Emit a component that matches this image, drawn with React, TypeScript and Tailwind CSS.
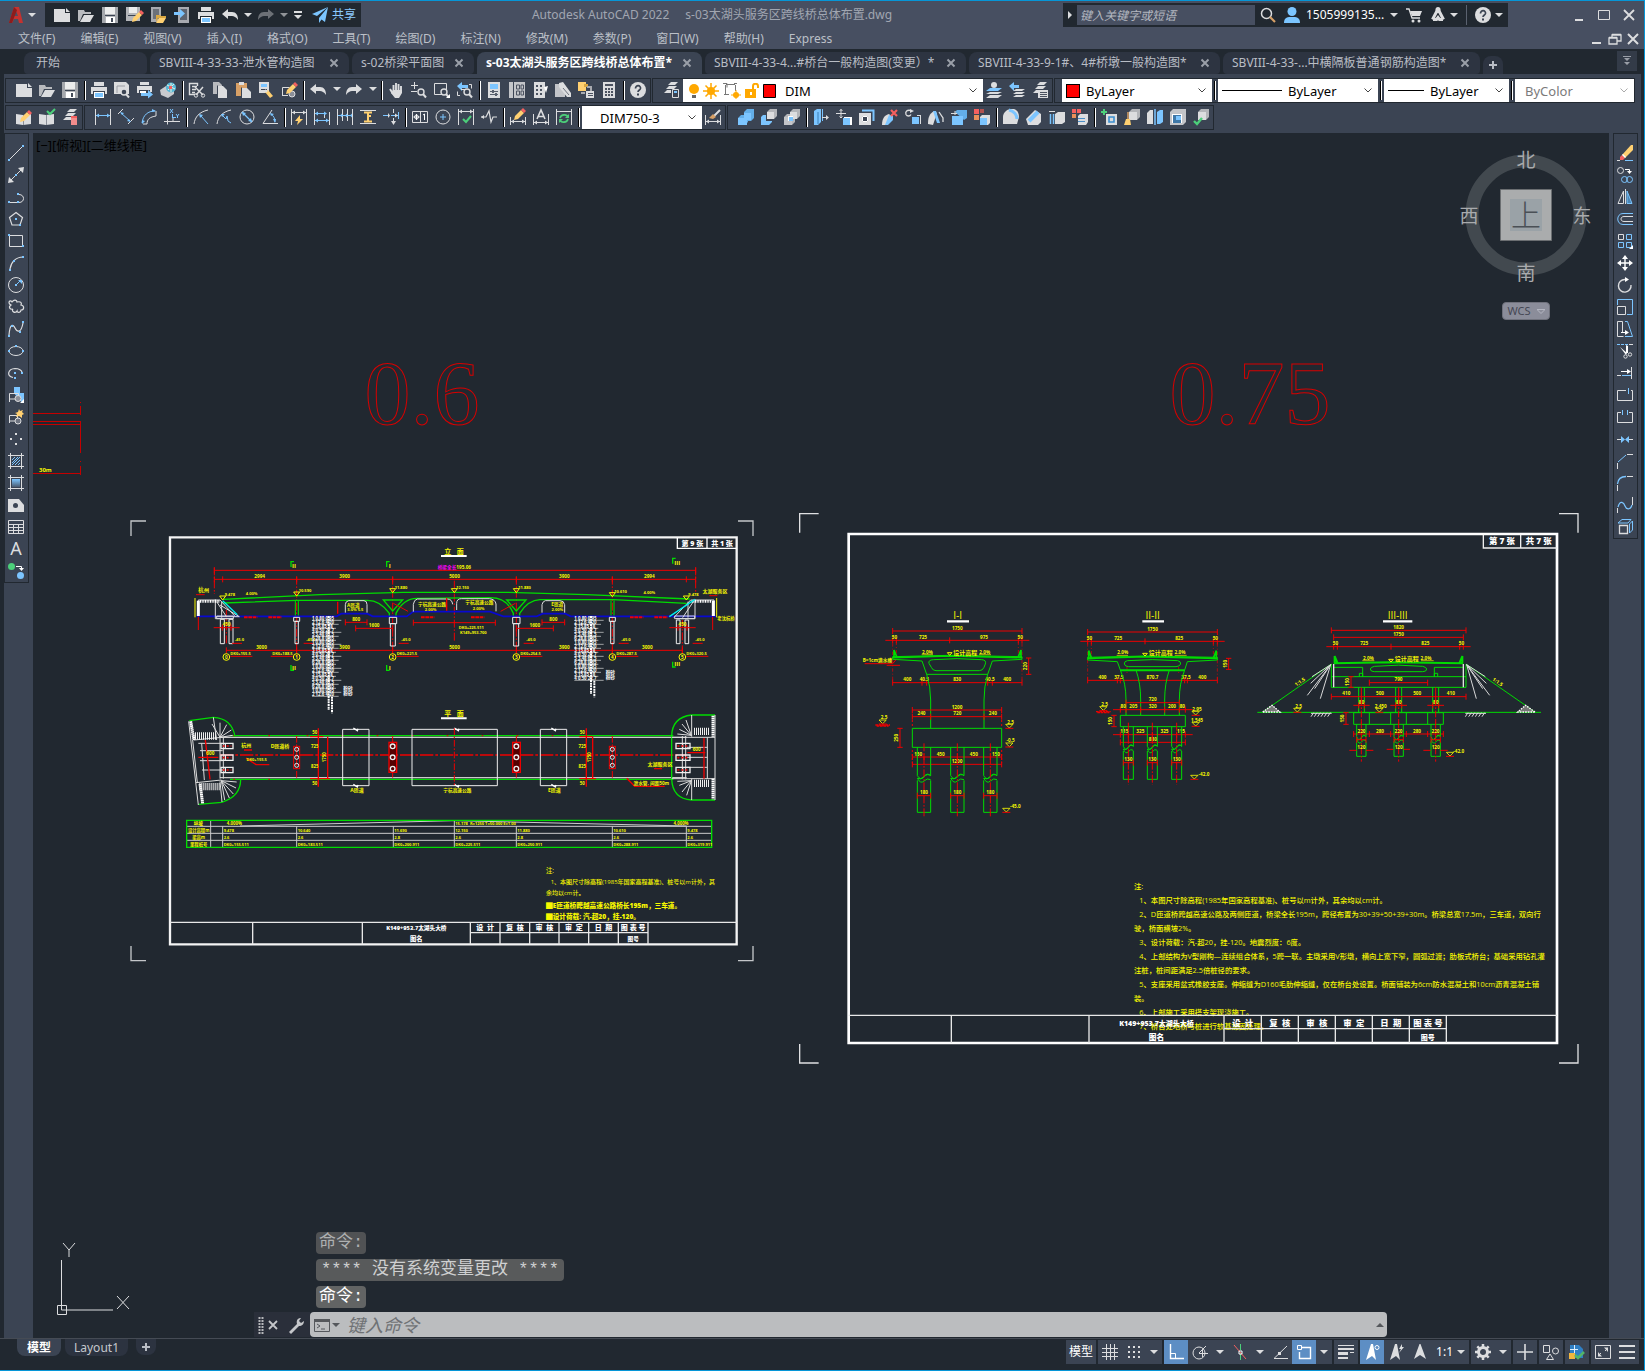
import { useState, type ReactNode } from "react";

const W = "#dcdddf";
const B = "#7cc5ff";
const Y = "#ffd071";
const R = "#f4605f";
const G = "#4ccf7a";
const D = "#3b4453";

const s = (d: string, c = W, w = 1) => (
  <path d={d} stroke={c} strokeWidth={w} fill="none" />
);
const f = (d: string, c = W) => <path d={d} fill={c} />;

const pencil = (
  <>
    {f("M5 9l6-6 3 3-6 6-4 1z", Y)}
    {f("M11 3l2-2 3 3-2 2z", R)}
  </>
);
const magnifier = (
  <>
    <circle cx="10" cy="10" r="3" stroke={W} strokeWidth="1.4" fill={D} />
    {s("M12 12l3 3.500", W, 2)}
  </>
);
const dots = (pts: number[][], c = B) =>
  pts.map(([x, y]) => <rect key={`${x}-${y}`} x={x} y={y} width="2" height="2" fill={c} />);
const layers = (
  <>
    {f("M5 3l3-3h7l-3 3z")}
    {f("M3 7l3-3h8l-3 3z")}
    {f("M1 11l3-3h8l-3 3z")}
  </>
);
const cube = (x: number, y: number, n: number, front = W, side = "#b4b6ba") => (
  <>
    <path d={`M${x} ${y + 3}l3-3h${n}v${n}l-3 3H${x}z`} fill={side} />
    <rect x={x} y={y + 3} width={n} height={n} fill={front} />
  </>
);

const ICONS: Record<string, ReactNode> = {
  new: <>{f("M0 2h11v4h5v9H0z")}{f("M12 1l4 4h-4z")}</>,
  open: <>{f("M0 3h6l1 2h6v2H5l-3 7H0z", "#b9bbbf")}{f("M6 8h10l-4 7H2z")}</>,
  save: <>{f("M0 0h16v16H0z", "#b4b6ba")}{f("M3 0h10v7H3z", "#eceded")}{f("M4 10h9v6H4z", "#fff")}{f("M0 0h3v16H0zM13 0h3v16h-3z", "#a5a8ad")}{f("M9 11h2v4H9z", "#444c5a")}{s("M3 8.500h10", D)}</>,
  saveas: <>{f("M0 0h14v14H0z", "#b4b6ba")}{f("M3 0h8v6H3z", "#eceded")}{s("M2 8.500h10", D)}<g transform="translate(2 2)">{pencil}</g></>,
  openweb: <>{f("M1 0h10v15H1z", "#a8aab0")}{f("M3 2h6v10H3z", "#6b7079")}{f("M6 8h4l1 1h5v2H8l-2 4z", "#d9a741")}{f("M9 11h7l-3 5H6z", Y)}</>,
  saveweb: <>{f("M4 0h11v16H4z", "#a8aab0")}{f("M6 2h7v11H6z", "#5e6470")}{f("M0 5h6V2l5 4.500-5 4.500V8H0z", B)}</>,
  print: <>{f("M3 0h10v4H3z")}{f("M0 5h16v7h-2V9H2v3H0z")}{f("M3 10h10v6H3z", "#fff")}{f("M4 11h8v4H4z", B)}</>,
  undo: f("M0 7l6-5v3h4c4 0 6 3 6 8-2-3-4-4-6-4H6v3z"),
  redo: f("M16 7l-6-5v3H6c-4 0-6 3-6 8 2-3 4-4 6-4h4v3z"),
  preview: <>{f("M0 0h12l3 3v9H0z")}{s("M3 11V4h8", "#9b9ea5")}{magnifier}</>,
  publish: <>{f("M3 0h9v3H3zM0 4h15v6h-2V8H2v3H0z")}{f("M3 9h6v2H3z", "#fff")}{f("M4 11h7V8l5 4.500-5 4V14H4z", B)}</>,
  dwf: <><path d="M0 8l6-4 8 2v6l-6 4-7-3z" fill="#c9cbcf" /><circle cx="11" cy="5.500" r="5" fill="#58b8d8" />{s("M7 3l8 4M8 8l6-6M11 1v9", "#e8f4e0")}{f("M9 4h3v3H9z", R)}</>,
  cut: <>{s("M8.500 4V1.500h-8v11H6M3 4.500h5M3 7.500h4M3 10.500h3", W, 1.4)}{s("M6 5l8 8M14 5l-7 8", W, 1.5)}<circle cx="7" cy="13.500" r="1.700" stroke={W} fill="none" /><circle cx="14" cy="13.500" r="1.700" stroke={W} fill="none" /></>,
  copy: <>{f("M1 0h6l3 3v9H1z", "#b9bbbf")}{f("M6 4h5l4 4v8H6z")}{s("M5.500 3.500v9", D)}</>,
  paste: <>{f("M1 1h11v13H1z", "#d8a066")}{f("M4 0h5v3H4z")}{f("M7 6h5l4 4v6H7z")}{s("M6.500 5.500v10", D)}</>,
  match: <>{f("M1 0h10v11H1z")}{f("M3 2h6v3H3z", B)}{s("M3 7.500h6", D)}{f("M7 10l3-2 5 6-3 2z", Y)}{s("M9 10l-2-2", W, 2)}</>,
  blockedit: <>{s("M1 13.500h6M1.500 13V5.500h7")}<circle cx="11" cy="12" r="3" stroke={W} fill="#8b8f98" /><g transform="translate(1 -1)">{pencil}</g></>,
  pan: <>{s("M5.500 9V3M8 8V1M10.500 8V2M13 10V4M2 7l3 5", W, 1.9)}{f("M5 8h9v3l-3 5H7l-4-5z")}</>,
  zoomrt: <>{s("M3.500 0v7M0 3.500h7M0 9.500h6")}{magnifier}</>,
  zoomwin: <>{s("M12.500 8V1.500h-12v11H8")}{magnifier}{f("M16 12v4h-4z", "#fff")}</>,
  zoomprev: <>{f("M0 4l5-4v3h6v3H5v3z", B)}{s("M3 13.500h-2.500v-4M12 2.500h2.500v4", W)}{s("M4 7.500h5", W)}{magnifier}</>,
  props: <>{f("M2 0h12v16H2z")}{f("M4 2h8v5H4z", B)}{s("M4 9.500h8M4 12.500h8", "#5a616e")}{f("M6 8h2v3H6zM9 11h2v3H9z", "#5a616e")}</>,
  dcenter: <>{f("M0 0h4v16H0zM5 0h11v16H5z", "#c3c5c9")}{s("M7.500 3h3v4h-3zM12 3h2.500v4H12zM7.500 9h3v4h-3zM12 9h2.500v4H12z", "#4b5260")}</>,
  palettes: <>{f("M2 0h11v16H2z")}{f("M4 3h2v2H4zM8 3h2v2H8zM4 7h2v2H4zM8 7h2v2H8zM4 11h2v2H4zM8 11h2v2H8z", "#4b5260")}{f("M12 5l4-1-2 7z", "#fff")}</>,
  sheetset: <>{f("M0 2h7l3 3v10H0z", "#c3c5c9")}{f("M4 1l4-1 8 11v4h-4L4 5z")}{s("M8 6l6 7", "#6e737d")}</>,
  markup: <>{f("M0 0h8v9H0z", Y)}{f("M6 2h4v3H6z", "#d9a741")}{s("M9 5h4v4M3 11h4", "#a8aab0", 2)}{f("M8 9h8v7H8z")}{s("M10 11.500h5M10 13.500h5", "#4b5260")}</>,
  calc: <>{f("M2 0h12v16H2z")}{f("M4 2h8v2H4z", "#4b5260")}{f("M4 6h2v2H4zM7 6h2v2H7zM10 6h2v2h-2zM4 9h2v2H4zM7 9h2v2H7zM10 9h2v2h-2zM4 12h2v2H4zM7 12h2v2H7zM10 12h2v2h-2z", "#4b5260")}</>,
  help: <><circle cx="8" cy="8" r="8" fill={W} />{s("M5.500 6.500C5.500 2.500 11 3 10.500 6.500 10.300 8 8 8 8 10", "#3b4453", 1.7)}{f("M7 11.500h2v2H7z", "#3b4453")}</>,
  layerprops: <>{layers}{f("M8 7h8v9H8z", D)}{s("M9.500 7.500h6v8h-6z")}{f("M11 9h3v2h-3z", B)}</>,
  laycur: <>{f("M4 6h12l-4 3H0z", B)}{f("M4 10h12l-4 2H0zM4 13h12l-4 3H0z")}<circle cx="8" cy="3" r="3" fill={W} /></>,
  layprev: <>{f("M0 4l5-4v3h5v3H5v3z", B)}{f("M7 7h9l-3 2H4zM7 10h9l-3 2H4zM7 13h9l-3 2H4z")}</>,
  laystate: <>{layers}{f("M6 8h10v8H6z")}{s("M8 10.500h7M8 12.500h7M8 14.500h7", "#4b5260")}</>,
  refedit: <>{f("M0 5l7 1 8-1v10l-8 1-7-1z")}{s("M7.500 6v10", "#8b8f98")}{pencil}</>,
  refok: <>{f("M0 5l7 1 8-1v10l-8 1-7-1z")}{s("M7.500 6v10", "#8b8f98")}{s("M8 2l3 3 5-5", G, 2)}</>,
  laydel: <>{layers}{f("M9 7h6v9H9z", "#f28c8c")}{f("M9 7h6v2H9z", R)}</>,
  dimlin: <>{s("M.500 0v16M15.500 0v16")}{s("M1 6.500h14", B)}{f("M1 6.500l3-2v4zM15 6.500l-3-2v4z", B)}</>,
  dimali: <>{s("M0 5l5-5M10 15l6-6")}{s("M3 4l9 8", B)}{f("M2 3l4 1-2 2zM13 13l-4-1 2-2z", B)}</>,
  dimarc: <>{s("M6 15C6 10 9 8 15 7M2 15h4M15 7V2")}{s("M1 14C2 6 7 2 14 2", B)}{f("M1 15l0-4 3 1zM15 2l-4-2v3z", B)}</>,
  dimord: <>{s("M3.500 0v15.500M0 12.500h16M9 9v4")}{s("M8 8.500h4M8.500 5v4M6 0l3 4M9 0L6 4M12 5l1.500 2L15 5M13.500 7v2", B)}</>,
  dimrad: <>{s("M1 15C2 8 6 3 15 1")}{s("M8 7l7 8", B)}{f("M6 5l4 1-3 3z", B)}</>,
  dimjog: <>{s("M1 15C2 8 6 3 15 1")}{s("M7 7l3 3 1-3 1 5 3 2", B)}{f("M5 5l4 0-3 3z", B)}</>,
  dimdia: <><circle cx="8" cy="8" r="7" stroke={W} fill="none" />{s("M3 3l10 10", B, 1.2)}{f("M3 3l4 1-3 3zM13 13l-4-1 3-3z", B)}</>,
  dimang: <>{s("M10 1L1 14.500h15")}{s("M9 5c3 2 4 5 4 8", B)}{f("M8 4l4 1-3 2zM13 14l-2-4h3z", B)}</>,
  dimquick: <>{s("M.500 0v16M15.500 0v16M1 3.500h14")}{f("M1 3.500l3-2v4zM15 3.500l-3-2v4z")}{f("M9 6l-5 6h3l-1 4 6-6H9z", Y)}</>,
  dimbase: <>{s("M.500 0v16M10.500 5v4M15.500 3v13")}{s("M1 4.500h11M1 11.500h14", B)}{f("M1 4.500l3-2v4zM13 4.500l-3-2v4zM1 11.500l3-2v4zM15 11.500l-3-2v4z", B)}</>,
  dimcont: <>{s("M.500 0v16M5.500 0v12M10.500 0v12M15.500 0v16")}{s("M1 6.500h14", B)}{f("M3 6.500l2-2v4zM8 6.500l2-2v4zM13 6.500l2-2v4z", B)}</>,
  dimspace: <>{s("M0 1.500h16M0 14.500h16")}{s("M4 3.500h8M8 3v10M4 12.500h8M8 7h3", Y, 2)}</>,
  dimbreak: <>{s("M10.500 0v4M10.500 9v6")}{s("M0 6.500h6M8 6.500h8M15.500 3v7", B)}{f("M8 12l2.500 4 2.500-4zM15 6.500l-3-2v4zM5 4v5l2-2.500z")}</>,
  tolerance: <>{s("M.500 2.500h15v11H.500zM8.500 3v10")}<circle cx="4.500" cy="8" r="2" stroke={W} fill="none" />{s("M1.500 8h6M4.500 5v6M11 6l1.500-1v6", "#fff")}</>,
  center: <><circle cx="8" cy="8" r="7" stroke={W} fill="none" />{s("M5 8h6M8 5v6", B)}</>,
  inspect: <>{s("M.500 0v16M15.500 0v16M1 2.500h14")}{f("M1 2.500l3-2v4zM15 2.500l-3-2v4z")}{s("M5 10l3 3 5-6", G, 2)}</>,
  jogline: <>{s("M0 8h5l3-6 2 11 2-5h4", W, 1.2)}{f("M0 8l3-2v4z")}</>,
  dimedit: <>{s("M.500 8v8M15.500 8v8M1 12.500h14")}{f("M1 12.500l3-2v4zM15 12.500l-3-2v4z")}<g transform="translate(0 -2)">{pencil}</g></>,
  dimtedit: <>{s("M.500 5v11M15.500 5v11M1 13.500h14")}{f("M1 13.500l3-2v4zM15 13.500l-3-2v4z")}{s("M4 10l4-9 4 9M5.500 7.500h5", W, 1.6)}</>,
  dimupdate: <>{s("M.500 0v16M15.500 0v16M1 2.500h14")}{s("M4 9c1-4 7-4 8-1M12 10c-1 4-7 4-8 1", G, 1.6)}{f("M13 5v4H9zM3 14v-4h4z", G)}</>,
  dimstyle: <>{s("M.500 6v10M15.500 6v10M1 12.500h14")}{f("M1 12.500l3-2v4zM15 12.500l-3-2v4z")}{s("M9 7l6-6", W, 2)}{f("M4 9l4-4 3 3-3 2z", "#d8a066")}</>,
  union: <>{f("M0 9l3-3h3V3l3-3h7v9l-3 3h-3v1l-3 3H0z", "#63aee8")}{f("M0 9h6V4h7v7H9v5H0z", B)}</>,
  subtract: <>{f("M0 8l2-2h3v6h6v1l-3 3H0z", B)}{cube(6, 0, 7)}</>,
  intersect: <>{cube(0, 5, 8, "#c3c5c9")}{cube(6, 0, 7)}{f("M4 7h5v5H4z", "#fff")}{f("M5 8h4v4H5z", B)}</>,
  extrudeface: <>{f("M1 2l3-2h4v13l-3 3H1z", B)}{s("M5 3v12", "#3b7fb5")}{s("M9.500 0v12", B)}{s("M9 8.500h6", W)}{f("M16 8.500l-3-2.500v5z")}</>,
  moveface: <>{s("M5 0v9M0 4.500h10M3.500 2L5 .500 6.500 2M3.500 7.500L5 9l1.500-1.500", W)}{f("M8 8h8v8H8z", "#fff")}{f("M7 9h7v7H7z", B)}</>,
  offsetface: <>{f("M0 4h12v12H0z")}{f("M3 7h6v6H3z", D)}{s("M3.500 7.500h5v5h-5z", "#fff")}{s("M3 1.500h11.500V12", B, 2)}</>,
  delface: <>{f("M0 16c0-7 3-10 7-11l2 2-4 9z")}{f("M7 6l4 1v4l-5 5H3z", B)}{s("M9 1l6 6M15 1L9 7", R, 2.2)}</>,
  rotface: <>{s("M6 1.500c-4-1-6 1-5 4 1 2 4 2 5 0", W, 1.3)}{f("M5 0l4 2-4 2z")}{s("M12 6.500h4M15.500 6v9", W)}{f("M7 8h7v7H7z", B)}</>,
  taperface: <>{f("M0 15c0-6 1-10 6-13l3 2-4 12z")}{f("M5 2h3l4 12H9z", B)}{s("M11 3l4 6v4", W, 1.3)}</>,
  copyface: <>{f("M4 3l2-2h10v8l-3 2z", "#63aee8")}{f("M1 7h11v9H1z", B)}{s("M0 4.500h6M4 2v4", W)}</>,
  colorface: <>{f("M0 0h5v5H0z", R)}{f("M6 0h4v4H6z", "#b0524f")}{f("M0 6h5v5H0z", "#e8905a")}{f("M6 8l2-2h8v8l-2 2H6z")}{f("M6 9h7v7H6z", B)}</>,
  copyedge: <>{f("M0 8c0-4 3-7 7-8h4c3 1 5 4 5 8l-2 7H0z")}{s("M6 1c5 1 8 5 8 9", B, 3)}</>,
  coloredge: <>{f("M0 10L9 1l6 4v8l-3 3H2z")}{s("M3 12L12 3", B, 4)}</>,
  imprint: <>{f("M6 5l3-2h7v10l-3 2H6z")}{s("M1.500 5v10M4.500 5v10", B, 1.5)}{s("M0 2.500h6", W)}</>,
  clean: <>{f("M0 0h4v4H0zM5 0h4v4H5z", R)}{f("M0 5h4v4H0z", "#e8905a")}{f("M6 7l2-2h8v8l-2 3H6z")}{s("M6 9.500h7M6 12.500h7", "#4b8fc8")}</>,
  separate: <>{s("M3 0v6M0 3h6", G, 2)}{f("M5 5h11v11H5z")}{s("M8 8h5v5H8z", "#3b8fd0", 1.6)}</>,
  shell: <>{cube(5, 0, 8)}{s("M4 3v7", "#d8a066", 1.5)}{f("M2 10h4l1 6H0z", Y)}</>,
  slice: <>{f("M0 4l3-3h3v14H0z")}{f("M10 3l3-2h3v12l-3 2h-3z", B)}{s("M8 0v16", B, 1.5)}</>,
  thicken: <>{f("M0 3l3-3h13v13l-3 3H0z", "#c3c5c9")}{f("M2 5h10v9H2z", "#fff")}{f("M3 6h8v8H3z", "#3f78a8")}{f("M6 7h5v4H6z", B)}</>,
  check: <>{cube(5, 0, 8)}{s("M1 12l3 3 5-6", G, 2.4)}</>,
  line: <>{s("M2 14L14 2")}{dots([[0, 14], [14, 0]])}</>,
  xline: <>{s("M3 13L13 3")}{f("M0 16l1-6 5 5zM16 0l-6 1 5 5z")}{dots([[7, 7]])}</>,
  pline: <>{s("M2 13.500h7M11 5.500c6 0 6 8 0 8")}{dots([[0, 12], [9, 4], [9, 12]])}</>,
  polygon: <>{s("M8 1.500L14.500 6.500 12 14H4L1.500 6.500z", W, 1.2)}{dots([[7, 7], [11, 13]])}</>,
  rect: <>{s("M1.500 2.500h13v11h-13z")}{dots([[0, 1], [14, 12]])}</>,
  arc: <>{s("M2 14C3 7 8 2 15 2", W, 1.2)}{dots([[1, 14], [5, 5], [14, 1]])}</>,
  circle: <><circle cx="8" cy="8" r="7.500" stroke={W} fill="none" />{s("M8 8l4-4", B)}{f("M10 3h4v4z", B)}{dots([[7, 7]])}</>,
  cloud: s("M3 6C-1 4 2 0 4 3 6 0 9 1 9 3c4-1 5 1 4 3 4 1 3 5 0 5 0 3-4 3-4 1-2 3-6 0-4-2C2 11 0 8 3 6z", W, 1.2),
  spline: <>{s("M1 14C2 2 5 3 7 7s6 6 8-5", W, 1.2)}{dots([[0, 14], [3, 4], [11, 10], [14, 0]])}</>,
  ellipse: <><ellipse cx="8" cy="8" rx="7" ry="4.500" stroke={W} fill="none" />{dots([[0, 7], [7, 2], [14, 7]])}</>,
  ellarc: <>{s("M5 12.500C-2 11 0 4 7 3.500c4 0 7 2 7 4", W, 1.2)}{dots([[6, 7], [13, 7], [6, 12]])}</>,
  insert: <>{f("M6 0h6v6h4v10l-4-2-6-8z", B)}{s("M1.500 12V6.500h9V12H1.500v3")}<circle cx="10" cy="11.500" r="3" stroke={W} fill="#8b8f98" />{f("M16 12v4h-4z", "#fff")}</>,
  block: <>{s("M1.500 14V6.500h8V12H2")}<circle cx="10" cy="12" r="3" stroke={W} fill="#6e7480" />{f("M11 0l1 2 3-1-1 2 2 2-2 1 0 3-3-2-3 1 1-3-2-1 3-1z", Y)}</>,
  point: dots([[7, 2], [2, 7], [12, 7], [7, 12]], W),
  hatch: <>{s("M0 2.500h16M0 13.500h16M2.500 0v16M13.500 0v16")}{s("M4 7l3-3M4 10l6-6M4 12l8-8M7 12l5-5M10 12l2-2", B)}</>,
  gradient: <><defs><linearGradient id="grad" x1="0" y1="0" x2="0" y2="1"><stop offset="0" stopColor={B} /><stop offset="1" stopColor="#4a5a6e" /></linearGradient></defs>{s("M0 2.500h16M0 13.500h16M2.500 0v16M13.500 0v16")}<rect x="4" y="4" width="8" height="8" fill="url(#grad)" /></>,
  region: <>{f("M0 2h11l5 6v7H0z")}<circle cx="7.500" cy="8.500" r="2.500" fill={D} /></>,
  table: <>{s("M.500 1.500h15v13H.500zM0 5.500h16M0 8.500h16M0 11.500h16M5.500 5v10M10.500 5v10")}</>,
  mtext: <text x="8" y="14" fontSize="18" textAnchor="middle" fill={W}>A</text>,
  addsel: <><circle cx="3.500" cy="3.500" r="3.500" fill={G} /><circle cx="12.500" cy="12.500" r="3.500" fill={B} />{s("M8 3.500h5.500V6", "#fff")}{f("M11 5h5l-2.500 3z", "#fff")}</>,
  erase: <>{s("M0 15.500h3", W)}{s("M8 15.500h8", B)}{f("M5 10L14 0h2v5L8 13z", Y)}{f("M3 12l2-2 3 3-2 2H3z", R)}{f("M5 10l1-1 3 3-1 1z", "#fff")}</>,
  copyobj: <><circle cx="3.500" cy="3.500" r="3" stroke={W} fill="none" /><circle cx="7.500" cy="12.500" r="3" stroke={B} fill="none" /><circle cx="12.500" cy="12.500" r="3" stroke={B} fill="none" />{s("M8 2.500h4.500V5", "#fff")}{f("M10 4h5l-2.500 3z", "#fff")}</>,
  mirror: <>{s("M6.500 2v12.500H1z")}{s("M8.500 0v15", W)}{f("M10 2v13h5z", "#4b86b5")}{s("M10 2v12.500h5z", B)}</>,
  offset: <>{s("M16 2.500H6C-1 2.500-1 13.500 6 13.500h10", B)}{s("M16 5.500H7c-4 0-4 5 0 5h9")}</>,
  array: <>{s("M1.500 1.500h5v5h-5z")}{s("M9.500 1.500h5v5h-5zM1.500 9.500h5v5h-5zM9.500 9.500h5v5h-5z", B)}{f("M16 12v4h-4z", "#fff")}</>,
  move: <>{s("M8 2v12M2 8h12", "#fff", 1.4)}{f("M8 0l3 4H5zM8 16l3-4H5zM0 8l4-3v6zM16 8l-4-3v6z", "#fff")}</>,
  rotate: <>{s("M8 2.500A6.300 6.300 0 1 0 14 8", W, 1.4)}{f("M8 0l4 2.500L8 5z", "#fff")}</>,
  scale: <>{s("M.500 6V.500h15v15H10", B)}{s("M.500 7.500h8v8h-8z")}</>,
  stretch: <>{s("M5.500 12V.500h-5v15h6")}{s("M8 .500h2.500l5 15H8", B)}{s("M4 11.500h5", "#fff")}{f("M8 9l4 2.500L8 14z", "#fff")}</>,
  trim: <>{s("M0 1.500h3M4 1.500h3M8 1.500h3", B)}{s("M12 1.500h4")}{f("M9 2l2 1v7H9zM3 4l7 6-1 2z", "#fff")}<circle cx="8.500" cy="13.500" r="1.700" stroke={W} fill="none" /><circle cx="13" cy="11.500" r="1.700" stroke={W} fill="none" /></>,
  extend: <>{s("M14.500 2v12M0 10.500h4")}{s("M5 10.500h9", B)}{s("M4 6.500h7", "#fff")}{f("M10 4l4 2.500L10 9z", "#fff")}</>,
  breakpt: <>{s("M9 3.500H.500v10h15v-10H14")}{s("M11.500 1v6", B)}</>,
  breakobj: <>{s("M4 3.500H.500v10h15v-10H12")}{s("M5.500 1v5M10.500 1v5", B)}</>,
  join: <>{s("M0 8.500h4M12 8.500h4")}{f("M4 5l4 3.500L4 12zM12 5L8 8.500l4 3.500z", B)}</>,
  chamfer: <>{s("M.500 16v-6M10 1.500h6")}{s("M1 9l8-7", B)}</>,
  fillet: <>{s("M.500 16v-6M10 1.500h6")}{s("M.500 9C1 4 4 1.500 9 1.500", B, 1.3)}</>,
  blend: <>{s("M.500 16v-5M15.500 0v8")}{s("M1 10c2-8 6-4 7-1s5 5 7-1", B, 1.2)}</>,
  explode: <>{s("M2.500 6.500h8v8h-8z", W, 1.3)}{s("M1 4l4-3.500h9L11 4zM12.500 5l3-3v9l-3 3z", B)}</>,
  grid: s("M4.500 0v16M8.500 0v16M12.500 0v16M0 4.500h16M0 8.500h16M0 12.500h16"),
  snap: dots([[2, 2], [7, 2], [12, 2], [2, 7], [7, 7], [12, 7], [2, 12], [7, 12], [12, 12]], W),
  ortho: <>{s("M2.500 0v14.500H16", "#fff", 1.4)}{s("M3 9.500h4.500V14", "#fff")}</>,
  polar: <><circle cx="7" cy="9" r="6" stroke={W} fill="none" />{s("M7 9L14 2M7 9.500h9M10.500 6v7", W)}</>,
  iso: <>{s("M2 1l12 14", R)}{s("M8.500 0v6M8.500 10v6", G)}{s("M7 7h3v3H7z", "#fff")}</>,
  otrack: <>{s("M15 2L2 14.500h14")}{f("M6 8h3v3H6z")}</>,
  osnap: <>{s("M6 3.500h8.500v11h-11V8", "#fff", 1.4)}{s("M1.500 1.500h4v4h-4z", "#fff")}</>,
  lwt: <>{f("M0 1h16v1H0zM0 4h16v2H0zM0 8h10v3H0zM0 13h10v2H0zM12 8h4v1h-4z")}</>,
  anno1: <>{f("M7 0l2 0 3 16-4-4-6 4z", "#fff")}<circle cx="13" cy="3.500" r="2" stroke="#fff" fill="none" /></>,
  anno2: <>{f("M7 0l2 0 3 16-4-4-6 4z")}{f("M14 0l-3 5h2l-2 4 5-6h-2z")}</>,
  anno3: f("M7.500 0h1L14 15l-6-4-6 4z"),
  gear: <><circle cx="8" cy="8" r="4.500" stroke={W} strokeWidth="3" fill="none" />{s("M8 0v3M8 13v3M0 8h3M13 8h3M2.300 2.300l2 2M11.700 11.700l2 2M13.700 2.300l-2 2M4.300 11.700l-2 2", W, 2.5)}</>,
  plus: s("M8 0v16M0 8h16", W, 1.6),
  shapes: <>{s("M.500 1.500h6v7h-6z")}<circle cx="12.500" cy="7" r="3" stroke={W} fill="none" />{s("M7 10l3.500 5.500h-7z")}</>,
  hardware: <>{f("M1 1h9l4 4v9H1z", "#2f7fc4")}{s("M1 5.500h8M5.500 1v8", "#dcefff")}{f("M0 9h6v6H0z", "#f0b63f")}{s("M6 11l3 3 6-6", "#52b56a", 2.6)}</>,
  expand: <>{s("M.500 1.500h15v13H.500z")}{s("M3 12l3-3M10 7l3-3", W)}{f("M3 8v4.500h4zM13 3.500V8L9 3.500z")}</>,
  menu: s("M0 2h16M0 8h16M0 14h16", W, 2),
  search: <><circle cx="6.500" cy="6.500" r="5" stroke={W} strokeWidth="1.500" fill="none" />{s("M10 10l5 5", "#d8a066", 2.2)}</>,
  user: <><circle cx="8" cy="4.500" r="4.500" fill={B} />{f("M0 16c0-6 4-6 8-6s8 0 8 6z", B)}</>,
  cart: <>{s("M0 2h3l3 9h8", W, 1.3)}{f("M4 4h12l-2 5H6z")}<circle cx="7" cy="14" r="1.500" fill={W} /><circle cx="13" cy="14" r="1.500" fill={W} /></>,
  adsk: <>{s("M8 2L2.500 12.500M8 2l5.500 10.500M3 12.500h3.500l1.500-2 1.500 2H13", W, 3)}<circle cx="8" cy="2.500" r="2.500" fill={W} /></>,
  send: <>{f("M16 0L0 7l5 2z", B)}{f("M16 0L7 11v5l2.500-3.500L13 15z", B)}</>,
};

function Icon({ name }: { name: string }) {
  return (
    <svg viewBox="0 0 16 16" className="block h-4 w-4 shrink-0 overflow-visible" aria-hidden="true">
      {ICONS[name]}
    </svg>
  );
}

function Caret({ dim = false }: { dim?: boolean }) {
  return (
    <svg viewBox="0 0 8 4" className={dim ? "h-1 w-2 shrink-0 opacity-60" : "h-1 w-2 shrink-0"} aria-hidden="true">
      <path d="M0 0h8L4 4z" fill="#dcdddf" />
    </svg>
  );
}

function ToolStrip({ items }: { items: string[] }) {
  return (
    <>
      {items.map((name, i) => {
        if (name === "|") {
          return (
            <span key={i} className="flex w-1.5 shrink-0 justify-center py-0.5">
              <span className="w-0.5 border-l border-black bg-white" />
            </span>
          );
        }
        if (name === "v") {
          return (
            <button key={i} type="button" aria-label="展开" className="flex w-[13px] shrink-0 items-center justify-center pb-1">
              <Caret />
            </button>
          );
        }
        return (
          <button key={i} type="button" aria-label={name} className="w-[23px] shrink-0 pb-px pl-[3px] hover:bg-[#525c6e]">
            <Icon name={name} />
          </button>
        );
      })}
    </>
  );
}

function ToolBox({ children }: { children: ReactNode }) {
  return (
    <div className="flex h-[25px] border border-[#212830]">
      <span className="w-[7px] shrink-0 py-[3px] pl-0.5">
        <span className="block h-full w-1 bg-[radial-gradient(#dcdddf_25%,transparent_30%)] bg-[size:2px_2px]" />
      </span>
      {children}
    </div>
  );
}

interface ComboProps {
  label: string;
  value: string;
  className: string;
  muted?: boolean;
  children?: ReactNode;
}

function Combo({ label, value, className, muted, children }: ComboProps) {
  return (
    <label className={`flex items-center bg-white pr-1.5 pl-1 text-[13px] ${muted ? "text-[#7a7a7a]" : "text-black"} ${className}`}>
      {children}
      <select aria-label={label} disabled={muted} className="h-full min-w-0 flex-1 appearance-none bg-transparent pl-1.5 leading-4 outline-none disabled:opacity-100">
        <option>{value}</option>
      </select>
      <svg viewBox="0 0 8 5" className="h-[5px] w-2" aria-hidden="true">
        <path d="M.5.5L4 4 7.500.5" stroke={muted ? "#aaa" : "#444"} fill="none" />
      </svg>
    </label>
  );
}

const STANDARD_TOOLS = [
  "new", "open", "save", "|", "print", "preview", "publish", "dwf", "|", "cut", "copy", "paste", "match", "blockedit", "|",
  "undo", "v", "redo", "v", "|", "pan", "zoomrt", "zoomwin", "zoomprev", "|", "props", "dcenter", "palettes", "sheetset", "markup", "calc", "|", "help",
];
const DIM_TOOLS = [
  "dimlin", "dimali", "dimarc", "dimord", "|", "dimrad", "dimjog", "dimdia", "dimang", "|", "dimquick", "dimbase", "dimcont", "dimspace", "dimbreak", "|",
  "tolerance", "center", "inspect", "jogline", "|", "dimedit", "dimtedit", "dimupdate", "|",
];
const SOLID_TOOLS = [
  "union", "subtract", "intersect", "|", "extrudeface", "moveface", "offsetface", "delface", "rotface", "taperface", "copyface", "colorface", "|",
  "copyedge", "coloredge", "imprint", "clean", "|", "separate", "shell", "slice", "thicken", "check",
];
const DRAW_TOOLS = [
  "line", "xline", "pline", "polygon", "rect", "arc", "circle", "cloud", "spline", "ellipse", "ellarc", "insert", "block", "point",
  "hatch", "gradient", "region", "table", "mtext", "addsel",
];
const MODIFY_TOOLS = [
  "erase", "copyobj", "mirror", "offset", "array", "move", "rotate", "scale", "stretch", "trim", "extend", "breakpt", "breakobj",
  "join", "chamfer", "fillet", "blend", "explode",
];
const MENUS = [
  "文件(F)", "编辑(E)", "视图(V)", "插入(I)", "格式(O)", "工具(T)", "绘图(D)", "标注(N)", "修改(M)", "参数(P)", "窗口(W)", "帮助(H)", "Express",
];
const TABS = [
  { title: "SBVIII-4-33-33-泄水管构造图", width: "w-[199px]" },
  { title: "s-02桥梁平面图", width: "w-[122px]" },
  { title: "s-03太湖头服务区跨线桥总体布置*", width: "w-[225px]" },
  { title: "SBVIII-4-33-4...#桥台一般构造图(变更）*", width: "w-[261px]" },
  { title: "SBVIII-4-33-9-1#、4#桥墩一般构造图*", width: "w-[251px]" },
  { title: "SBVIII-4-33-...中横隔板普通钢筋构造图*", width: "w-[257px]" },
];

function TitleBar() {
  return (
    <div className="flex h-[27px] items-start pt-0.5">
      <button type="button" aria-label="应用程序菜单" className="flex h-6 w-[45px] items-center gap-[5px] pl-[9px]">
        <svg viewBox="0 0 14 16" className="h-4 w-3.5" aria-hidden="true">
          <path d="M5 0h5l4 16h-4l-1-4H5l-2 4H0z" fill="#c5322f" />
          <path d="M7 4l2 5H5z" fill="#474f61" />
          <path d="M5 0L0 16h3L8 3z" fill="#8e1c1c" />
        </svg>
        <Caret />
      </button>
      <div className="flex h-6 items-center bg-[#212830] pl-[5px]">
        {["new", "open", "save", "saveas", "openweb", "saveweb", "print", "undo"].map((n) => (
          <button key={n} type="button" aria-label={n} className="w-6 pl-1">
            <Icon name={n} />
          </button>
        ))}
        <button type="button" aria-label="放弃列表" className="flex w-3 justify-center"><Caret /></button>
        <button type="button" aria-label="重做" className="w-6 pl-1 opacity-40"><Icon name="redo" /></button>
        <button type="button" aria-label="重做列表" className="flex w-3 justify-center"><Caret dim /></button>
        <button type="button" aria-label="自定义" className="flex w-4 flex-col items-center gap-0.5">
          <span className="h-0.5 w-2 bg-[#dcdddf]" />
          <Caret />
        </button>
        <button type="button" className="flex items-center gap-1 pr-[5px] pl-1.5 text-[#8ccaff]">
          <Icon name="send" />
          共享
        </button>
      </div>
      <div className="flex h-6 flex-1 items-center justify-center gap-4 whitespace-nowrap text-[#a1a6b1]">
        <span>Autodesk AutoCAD 2022</span>
        <span>s-03太湖头服务区跨线桥总体布置.dwg</span>
      </div>
      <div className="flex h-6 w-[445px] items-center bg-[#212830] text-white">
        <svg viewBox="0 0 4 8" className="mx-1 h-2 w-1.5" aria-hidden="true"><path d="M0 0l4 4-4 4z" fill="#dcdddf" /></svg>
        <input aria-label="搜索" placeholder="键入关键字或短语" className="h-5 w-[178px] bg-[#474f61] px-[3px] italic outline-none placeholder:text-[#b4b8c0]" />
        <button type="button" aria-label="search" className="ml-[5px]"><Icon name="search" /></button>
        <button type="button" className="ml-2 flex items-center gap-1.5">
          <Icon name="user" />
          1505999135...
          <Caret />
        </button>
        <button type="button" aria-label="cart" className="ml-2"><Icon name="cart" /></button>
        <button type="button" aria-label="应用" className="ml-2 flex items-center gap-1"><Icon name="adsk" /><Caret /></button>
        <span className="mx-2 h-5 w-px bg-[#5b6270]" />
        <button type="button" aria-label="help" className="flex items-center gap-1"><Icon name="help" /><Caret /></button>
      </div>
      <div className="flex h-6 w-[136px] items-center justify-end gap-[11px] pr-2">
        <button type="button" aria-label="最小化"><svg viewBox="0 0 14 14" className="h-3.5 w-3.5"><path d="M3 12h8" stroke="#dcdddf" strokeWidth="2" /></svg></button>
        <button type="button" aria-label="最大化"><svg viewBox="0 0 14 14" className="h-3.5 w-3.5"><path d="M1.500 2.500h11v9h-11z" stroke="#dcdddf" fill="none" /></svg></button>
        <button type="button" aria-label="关闭"><svg viewBox="0 0 14 14" className="h-3.5 w-3.5"><path d="M2 2l10 10M12 2L2 12" stroke="#dcdddf" strokeWidth="1.800" /></svg></button>
      </div>
    </div>
  );
}

function FileTabs() {
  const [active, setActive] = useState(2);
  return (
    <div className="flex h-[25px] items-end gap-[3px] pr-[7px] pl-6 text-[#b9bdc5]">
      <button type="button" className="h-[22px] w-[123px] rounded-t-lg rounded-b bg-[#2d3441] pl-3 text-left">开始</button>
      {TABS.map((tab, i) => (
        <button
          key={tab.title}
          type="button"
          onClick={() => setActive(i)}
          className={`flex h-[22px] items-center justify-between rounded-t-lg pr-2.5 pl-[9px] whitespace-nowrap ${tab.width} ${
            i === active ? "bg-[#3b4453] font-bold text-white" : "rounded-b bg-[#2d3441]"
          }`}
        >
          {tab.title}
          <svg viewBox="0 0 10 10" className="h-2.5 w-2.5 shrink-0" aria-hidden="true">
            <path d="M1.500 1.500l7 7M8.500 1.500l-7 7" stroke="#9a9fa8" strokeWidth="2" />
          </svg>
        </button>
      ))}
      <button type="button" aria-label="新图形" className="flex h-[18px] w-5 items-center justify-center rounded-t-lg bg-[#2d3441]">
        <svg viewBox="0 0 8 8" className="h-2 w-2"><path d="M4 0v8M0 4h8" stroke="#b9bdc5" strokeWidth="2" /></svg>
      </button>
      <button type="button" aria-label="更多选项卡" className="mb-[3px] ml-auto flex h-5 w-5 items-center justify-center bg-[#333b48]">
        <svg viewBox="0 0 8 10" className="h-2.5 w-2"><path d="M0 0h8v1H0zM1 2h6L4 5zM1 6h6L4 9z" fill="#9a9fa8" /></svg>
      </button>
    </div>
  );
}

function Toolbars() {
  return (
    <div className="flex flex-col gap-0.5 bg-[#3b4453] pt-1 pb-[3px] pl-px">
      <div className="flex gap-px">
        <ToolBox><ToolStrip items={STANDARD_TOOLS} /></ToolBox>
        <ToolBox>
          <ToolStrip items={["layerprops"]} />
          <Combo label="图层" value="DIM" className="w-[300px]">
            <svg viewBox="0 0 92 16" className="h-4 w-[92px] shrink-0" aria-hidden="true">
              <circle cx="7" cy="6" r="5" fill="#ffa800" />
              <path d="M5 12h4v3H5z" fill="#666" />
              <circle cx="24" cy="8" r="4" fill="#ffa800" />
              <path d="M24 0v16M16 8h16M18.500 2.500l11 11M29.500 2.500l-11 11" stroke="#ffa800" strokeWidth="1.500" />
              <path d="M39 1.500h9M38.500 2v9M48.500 2v6M36 .5h4v4M47 .5h3M37 11.500h5" stroke="#777" fill="none" />
              <circle cx="49" cy="12" r="3" fill="#ffa800" />
              <path d="M49 7v9M44 12h10" stroke="#ffa800" />
              <path d="M58 6h11v9H58z" fill="#ffa800" />
              <path d="M66 7V3c0-3 5-3 5 0v2" stroke="#ffa800" strokeWidth="2" fill="none" />
              <path d="M63 9h2v3h-2z" fill="#fff" />
              <path d="M76.500 1.500h12v13h-12z" fill="#f00" stroke="#000" />
            </svg>
          </Combo>
          <ToolStrip items={["laycur", "layprev", "laystate"]} />
        </ToolBox>
        <ToolBox>
          <Combo label="颜色" value="ByLayer" className="w-[150px]">
            <span className="h-3.5 w-3.5 shrink-0 border border-black bg-[#f00]" />
          </Combo>
          <ToolStrip items={["|"]} />
          <Combo label="线型" value="ByLayer" className="w-[160px]">
            <span className="h-px w-[60px] shrink-0 bg-black" />
          </Combo>
          <ToolStrip items={["|"]} />
          <Combo label="线宽" value="ByLayer" className="w-[125px]">
            <span className="h-px w-9 shrink-0 bg-black" />
          </Combo>
          <ToolStrip items={["|"]} />
          <Combo label="打印样式" value="ByColor" className="w-[119px]" muted />
        </ToolBox>
      </div>
      <div className="flex gap-px">
        <ToolBox><ToolStrip items={["refedit", "refok", "laydel"]} /></ToolBox>
        <ToolBox>
          <ToolStrip items={DIM_TOOLS} />
          <Combo label="标注样式" value="DIM750-3" className="w-[120px]"><span className="w-2" /></Combo>
          <ToolStrip items={["dimstyle"]} />
        </ToolBox>
        <ToolBox><ToolStrip items={SOLID_TOOLS} /></ToolBox>
      </div>
    </div>
  );
}

function SideBar({ items }: { items: string[] }) {
  return (
    <div className="flex w-[25px] flex-col border border-[#212830]">
      <span className="h-2 px-[3px] pt-0.5">
        <span className="block h-1 w-3.5 bg-[radial-gradient(#dcdddf_25%,transparent_30%)] bg-[size:2px_2px]" />
      </span>
      {items.map((name) => (
        <button key={name} type="button" aria-label={name} className="h-[22px] pl-[3px] hover:bg-[#525c6e]">
          <Icon name={name} />
        </button>
      ))}
    </div>
  );
}

/* ---------- model space ---------- */

const RED = "#ee0000";
const GRN = "#00dc00";
const YEL = "#f8f800";

interface TProps {
  x: number;
  y: number;
  size?: number;
  color?: string;
  anchor?: "start" | "middle" | "end";
  weight?: number;
  children: ReactNode;
}

function T({ x, y, size = 14, color = YEL, anchor = "middle", weight = 700, children }: TProps) {
  return (
    <text x={x} y={y} fontSize={size} fill={color} textAnchor={anchor} fontWeight={weight} xmlSpace="preserve">
      {children}
    </text>
  );
}

// horizontal dimension chain: one tick per x, one label per span
function Dim({ y, xs, labels = [], ext = 0 }: { y: number; xs: number[]; labels?: string[]; ext?: number }) {
  return (
    <>
      <path
        d={`M${xs[0] - ext} ${y}H${xs[xs.length - 1] + ext}` + xs.map((x) => `M${x} ${y - 9}v18`).join("")}
        stroke={RED}
        strokeWidth="3"
        fill="none"
      />
      {labels.map((label, i) => (
        <T key={i} x={(xs[i] + xs[i + 1]) / 2} y={y - 4}>{label}</T>
      ))}
    </>
  );
}

function VDim({ x, y1, y2, label }: { x: number; y1: number; y2: number; label: string }) {
  const mid = (y1 + y2) / 2;
  return (
    <>
      <path d={`M${x} ${y1}V${y2}M${x - 8} ${y1}h16M${x - 8} ${y2}h16`} stroke={RED} strokeWidth="3" fill="none" />
      <text transform={`translate(${x - 5} ${mid}) rotate(-90)`} fontSize="14" fill={YEL} textAnchor="middle" fontWeight="700">
        {label}
      </text>
    </>
  );
}

function Elev({ x, y, label, water = false }: { x: number; y: number; label: string; water?: boolean }) {
  return (
    <>
      <path d={`M${x - 11} ${y - 12}h22L${x} ${y - 1}z`} stroke={YEL} strokeWidth="2.500" fill="none" />
      <path d={`M${x - 12} ${y}h24`} stroke={RED} strokeWidth="3" />
      {water && <path d={`M${x - 22} ${y + 3}h44M${x - 18} ${y + 6}h36`} stroke={RED} strokeWidth="4" strokeDasharray="8 2" />}
      <T x={x + 4} y={y - 14}>{label}</T>
    </>
  );
}

function Piles({ xs, w, y1, y2, cut, label }: { xs: number[]; w: number; y1: number; y2: number; cut: number; label: string }) {
  return (
    <>
      {xs.map((x) => (
        <g key={x} fill="none" strokeWidth="3">
          <path d={`M${x - w} ${cut - 6}V${y1}M${x + w} ${cut - 6}V${y1}M${x - w} ${cut + 8}V${y2}h${2 * w}V${cut + 8}`} stroke={GRN} />
          <path
            d={`M${x - w} ${cut - 6}q${w / 2} 16 ${w} 4t${w} -4q${-w / 2} -10 ${-w} 2t${-w} 6q${w / 2} 18 ${w} 8t${w} -4`}
            stroke={GRN}
          />
          <path d={`M${x} ${y1 - 12}V${y2 + 16}`} stroke={RED} strokeDasharray="24 5 5 5" />
        </g>
      ))}
      {xs.map((x) => (
        <Dim key={x} y={y2 - 50} xs={[x - w, x + w]} labels={[label]} />
      ))}
    </>
  );
}

const DIGITS = ["1 0.80 0.95", "2 12.6 4.20", "3 15.85 18", "4 0.50 22.7", "5 3.48 61.5", "6 28.8 0.65"];

function SoilColumn({ x, rows, note }: { x: number; rows: number; note: string }) {
  return (
    <>
      {Array.from({ length: rows }, (_, i) => (
        <g key={i}>
          <T x={x} y={329 + i * 12} size={13} color="#fff" anchor="start" weight={700}>{DIGITS[i % 6]}</T>
          <path d={`M${x} ${331 + i * 12}h${88 - (i % 3) * 8}`} stroke="#ddd" strokeWidth="2" />
        </g>
      ))}
      <path d={`M${x + 50} 318v${rows * 12 + 42}M${x + 60} ${320 + rows * 12}v50`} stroke="#fff" strokeWidth="6" strokeDasharray="6 2" />
      <T x={x + 94} y={314 + rows * 12} size={14} color="#fff" anchor="start" weight={700}>{note}</T>
      <T x={x + 94} y={299 + rows * 12} size={14} color="#fff" anchor="start" weight={700}>{note}</T>
    </>
  );
}

function TitleBlock({ y1, y2, mid, xs, first, size }: { y1: number; y2: number; mid: number; xs: number[]; first: number; size: number }) {
  const heads = ["设  计", "复  核", "审  核", "审  定", "日  期", "图 表 号"];
  return (
    <>
      <path
        d={`M${xs[0]} ${y1}H${xs[xs.length - 1]}` + xs.slice(1, -1).map((x) => `M${x} ${y1}V${y2}`).join("") + `M${xs[first]} ${mid}H${xs[first + 6]}`}
        stroke="#e8e8e8"
        strokeWidth="4"
        fill="none"
      />
      {heads.map((h, i) => (
        <T key={h} x={(xs[first + i] + xs[first + i + 1]) / 2} y={mid - 7} size={size} color="#fff" weight={800}>{h}</T>
      ))}
      <T x={(xs[first - 1] + xs[first]) / 2} y={mid - 7} size={size - 4} color="#fff" weight={800}>K149+953.7太湖头大桥</T>
      <T x={(xs[first - 1] + xs[first]) / 2} y={y2 - 10} size={size - 2} color="#fff" weight={800}>图名</T>
      <T x={(xs[first + 5] + xs[first + 6]) / 2} y={y2 - 10} size={size - 4} color="#fff" weight={800}>图号</T>
    </>
  );
}

const AXES = [308, 530, 820, 1003, 1189, 1477, 1699];
const PROFILE = [
  ["9.478", "10.640", "11.690", "12.150", "11.880", "10.610", "9.478"],
  ["2.6", "2.6", "2.8", "2.6", "2.8", "2.6", "2.6"],
  ["DK0+155.511", "DK0+183.511", "DK0+200.911", "DK0+225.511", "DK0+250.911", "DK0+288.911", "DK0+319.911"],
];

function BridgeSheet() {
  return (
    <svg x="120" y="510" width="660" height="460" viewBox="0 0 1980 1380" fill="none">
      <path d="M33 78V33H78M1854 33h45v45M1899 1308v44h-45M33 1308v44h45" stroke="#c4c6c9" strokeWidth="4" />
      <path d="M150 82H1850V1303H150z" stroke="#f4f4f4" strokeWidth="7" />
      <path d="M1672 84v31h178M1761 84v31" stroke="#fff" strokeWidth="4" />
      <T x={1717} y={108} size={21} color="#fff" weight={800}>第 9 张</T>
      <T x={1806} y={108} size={21} color="#fff" weight={800}>共 1 张</T>
      <TitleBlock y1={1237} y2={1303} mid={1268} xs={[150, 398, 727, 1051, 1140, 1229, 1317, 1406, 1495, 1584, 1850]} first={3} size={21} />

      {/* elevation */}
      <T x={1002} y={132} size={21}>立   面</T>
      <path d="M963 138h77M963 625h77" stroke="#fff" strokeWidth="6" />
      <T x={1003} y={177} size={14} color="#f0f">桥梁全长<tspan fill={YEL}>195.06</tspan></T>
      <Dim y={181} xs={[283, 1727]} />
      <Dim y={208} xs={[283, 308, 530, 818, 1189, 1477, 1699, 1727]} labels={["", "2994", "3900", "5000", "3900", "2994", ""]} />
      <path d="M283 172v80M1727 172v80M1003 212v180M319 400V300M1687 430V330" stroke={RED} strokeWidth="3" strokeDasharray="24 5 5 5" />
      <path d="M530 200V440M818 200V440M1189 200V440M1477 200V440" stroke={RED} strokeWidth="3" strokeDasharray="24 5 5 5" />
      <path
        d="M310 268L600 254 850 247H1160L1400 254 1709 267M310 279L530 271H740Q780 270 808 310V322M828 322V310Q850 266 890 265L1110 263Q1160 262 1180 310V322M1199 322V310Q1225 270 1260 269H1480L1700 280M790 270H848L818 303zM1160 270H1218L1189 303z"
        stroke={GRN}
        strokeWidth="4"
      />
      <path d="M526 271V322M535 271V322M1473 271V322M1482 271V322" stroke={GRN} strokeWidth="3" />
      <path d="M230 319H650L664 311H742L758 319H860L880 305H1110L1150 319H1250L1268 311H1336L1352 319H1790" stroke="#0808d0" strokeWidth="5" />
      <path
        d="M521 322h18v12h-18zM525 334h10v67h-10zM1468 322h18v12h-18zM1472 334h10v67h-10zM808 322h22v19h-22zM811 341h15v67h-15zM1178 322h22v19h-22zM1181 341h15v67h-15zM301 328h12v73h-12zM327 328h12v73h-12zM1669 330h11v71h-11zM1695 330h11v71h-11z"
        stroke="#eee"
        strokeWidth="3"
      />
      <path d="M235 318V270H300L345 319M286 268V326H340M290 275l30 46M305 275v48M290 318h50v8h-50zM300 285l58 35H290M1782 318V270H1712L1662 322M1725 268V326H1668M1720 275l-32 48M1704 275v48M1664 318h60v8h-60zM676 308v-24q0-10 10-12h46q9 0 9 12v24M880 305v-22q2-14 12-16h90q14 0 16 16M1010 300v-20q0-14 14-14h84q18 2 20 16v22M1266 308v-24q2-10 10-12h44q12 0 14 12v24" stroke="#ddd" strokeWidth="3" />
      <path d="M235 272V318M1780 272V318" stroke="#fff" strokeWidth="9" />
      <path d="M240 274H300M1715 274H1775" stroke="#fff" strokeWidth="8" strokeDasharray="3 2" />
      <path d="M308 272L352 314M1648 320L1725 268" stroke="#0ee" strokeWidth="4" />
      <path d="M225 264V322M1790 264V322" stroke={YEL} strokeWidth="3" />
      <path d="M372 322h40M445 322h40M903 322h40M1053 322h40M1530 322h40M1603 322h40" stroke={RED} strokeWidth="6" strokeDasharray="11 2" />
      <path d="M228 254h26M1768 257h24M820 280l44 24M1186 280l-44 24M235 320v40M1778 320v40" stroke={RED} strokeWidth="3" />
      <Dim y={337} xs={[676, 741]} labels={["800"]} />
      <Dim y={355} xs={[707, 818]} labels={["1600"]} />
      <Dim y={338} xs={[880, 1126]} />
      <Dim y={337} xs={[1266, 1334]} labels={["800"]} />
      <Dim y={355} xs={[1189, 1300]} labels={["1600"]} />
      <Dim y={353} xs={[307, 333]} labels={["450"]} ext={26} />
      <Dim y={353} xs={[1674, 1701]} labels={["450"]} ext={26} />
      <Dim y={421} xs={[319, 530, 818, 1189, 1477, 1687]} labels={["3000", "3900", "5000", "3900", "3000"]} />
      <path d="M653 275v36M980 264v38" stroke={RED} strokeWidth="4" />
      {[319, 530, 818, 1189, 1477, 1687].map((x, i) => (
        <g key={x}>
          <circle cx={x} cy="441" r="10" stroke={YEL} strokeWidth="3" />
          <T x={x} y={446}>{i}</T>
          <T x={i === 1 ? x - 12 : x + 12} y={436} anchor={i === 1 ? "end" : "start"} size={12}>{`DK0+${155 + i * 33}.5`}</T>
          <path d={i === 1 ? "M452 439h66" : `M${x + 12} 439h66`} stroke={RED} strokeWidth="3" />
        </g>
      ))}
      {[[530, 250, "10.590"], [818, 240, "11.880"], [1003, 240, "12.150"], [1189, 240, "11.880"], [1477, 252, "10.610"], [308, 262, "9.478"], [1699, 262, "9.478"]].map(([x, y, l]) => (
        <g key={x}>
          <path d={`M${+x - 9} ${+y - 4}h18l-9 12z`} stroke={YEL} strokeWidth="3" />
          <T x={+x + 6} y={+y - 4} anchor="start" size={12}>{l}</T>
        </g>
      ))}
      {[330, 545, 830, 1205, 1490, 1712].map((x) => (
        <g key={x}>
          <T x={x + 14} y={392} size={12} anchor="start">-45.0</T>
          <path d={`M${x + 6} 400h30`} stroke={RED} strokeWidth="3" />
        </g>
      ))}
      <path d="M522 155h-9v16M809 155h-9v16M1667 145h-9v16M513 465v16h9M800 465v16h9M1658 455v16h9" stroke={GRN} strokeWidth="4" />
      <T x={522} y={174} size={18}>II</T>
      <T x={809} y={174} size={18}>I</T>
      <T x={1672} y={164} size={18}>III</T>
      <T x={522} y={480} size={18}>II</T>
      <T x={809} y={480} size={18}>I</T>
      <T x={1672} y={468} size={18}>III</T>
      <T x={251} y={246} size={16}>杭州</T>
      <T x={1785} y={249} size={15}>太湖服务区</T>
      <T x={1818} y={329} size={13}>老沈杭桥</T>
      <T x={700} y={290} size={14}>A匝道</T>
      <T x={706} y={304} size={12}>3.0% 5.5</T>
      <T x={936} y={287} size={14}>宁杭高速公路</T>
      <T x={932} y={302} size={12}>2.00%</T>
      <T x={1078} y={282} size={14}>宁杭高速公路</T>
      <T x={1076} y={300} size={12}>2.00%</T>
      <T x={1312} y={288} size={14}>E匝道</T>
      <T x={1312} y={304} size={12}>2.00%</T>
      <T x={395} y={256} size={12}>4.00%</T>
      <T x={1588} y={252} size={12}>4.00%</T>
      <T x={1054} y={358} size={12}>DK0+225.511</T>
      <T x={1060} y={372} size={12}>K149+953.700</T>
      <SoilColumn x={576} rows={20} note="粉砂" />
      <SoilColumn x={1363} rows={16} note="粉砂" />

      {/* plan */}
      <T x={1002} y={618} size={21}>平   面</T>
      <path d="M330 677H1660M330 808H1660" stroke={GRN} strokeWidth="4" />
      <path d="M300 682H1700M300 803H1700" stroke="#ccc" strokeWidth="4" />
      <path d="M340 677H500M340 808H500M560 677H1400" stroke={RED} strokeWidth="3" strokeDasharray="5 100" />
      <path d="M300 735H1700" stroke={RED} strokeWidth="4" strokeDasharray="40 6 8 6" />
      <path d="M668 658h79v169h-79zM876 658h256v169H876zM1261 658h79v169h-79z" stroke="#eee" strokeWidth="3" />
      <path d="M700 654l12 8 2-6M1003 654l12 8 2-6M1294 654l12 8 2-6M700 823l12 8 2-6M1003 823l12 8 2-6M1294 823l12 8 2-6" stroke="#fff" strokeWidth="4" />
      <path d="M1003 655V830M530 678V808M818 678V808M1189 678V808M1477 678V808" stroke={RED} strokeWidth="3" strokeDasharray="20 5 5 5" />
      {[818, 1189].map((x) => (
        <g key={x}>
          <rect x={x - 11} y="697" width="23" height="90" stroke={RED} strokeWidth="4" fill="#500" />
          {[709, 742, 776].map((y) => <circle key={y} cx={x} cy={y} r="7" stroke="#eee" strokeWidth="4" />)}
        </g>
      ))}
      {[530, 1477].map((x) => (
        <g key={x}>
          <rect x={x - 9} y="709" width="18" height="67" stroke={RED} strokeWidth="3" />
          {[718, 742, 766].map((y) => <circle key={y} cx={x} cy={y} r="6" stroke="#eee" strokeWidth="3" />)}
        </g>
      ))}
      <path d="M595 655V830M623 680V806M570 680h40M570 806h60M1399 655V830M1418 680V806M1378 680h40M1378 806h50" stroke={RED} strokeWidth="4" />
      {[666, 709, 768, 820].map((y, i) => (
        <g key={y}>
          <T x={584} y={y + 5} size={13}>{["50", "725", "825", "50"][i]}</T>
          <T x={1387} y={y + 5} size={13}>{["50", "725", "825", "50"][i]}</T>
        </g>
      ))}
      <text transform="translate(619 742) rotate(-90)" fontSize="13" fontWeight="700" fill={YEL} textAnchor="middle">1750</text>
      <text transform="translate(1414 742) rotate(-90)" fontSize="13" fontWeight="700" fill={YEL} textAnchor="middle">1750</text>
      <path d="M208 632L280 622Q336 625 345 680M235 883L305 877Q362 860 362 808M1785 615H1715Q1655 622 1655 680V806Q1657 866 1715 870H1785" stroke={GRN} strokeWidth="4" />
      <path d="M206 634L235 885M280 622L290 690M218 690L232 818M235 700h70M240 722h68M240 752h68M246 780h64M300 682V806M310 682V806M300 814l6 62M222 690l84-8M228 818l76-8M245 700l8 110M1785 615V870M1715 615V680M1715 806V870M1687 678V808M1697 678V808M1700 712h62M1700 742h62M1700 772h62M1762 682V806M1655 682h130M1655 806h130" stroke="#ddd" strokeWidth="3" />
      <path d="M212 634L222 690M240 822l8 58M1779 617V680M1779 806V868" stroke="#fff" strokeWidth="9" strokeDasharray="5 1" />
      <path d="M300 682l-24-40M300 682v-44M300 682l20-38M300 682l34-22M300 682l38-6M304 812l24 52M304 812l36 40M304 812l44 22M304 812l10 58M304 812l46 4M1714 676l-16-46M1714 676l-28-34M1714 676l-36-18M1714 676l-42-4M1714 812l-14 44M1714 812l-28 34M1714 812l-36 14M1714 812l-42 2" stroke="#ddd" strokeWidth="3" />
      <path d="M225 678h66M238 830h62M1722 664h48M1722 820h48" stroke="#eee" strokeWidth="22" strokeDasharray="3 3" />
      {[708, 743, 780].map((y) => (
        <g key={y}>
          <path d={`M303 ${y - 8}h36v16h-36zM316 ${y - 8}v16M1668 ${y - 8}h42v16h-42zM1688 ${y - 8}v16`} stroke="#eee" strokeWidth="4" />
          <path d={`M308 ${y}h26M1672 ${y}h34`} stroke={RED} strokeWidth="5" strokeDasharray="6 6" />
        </g>
      ))}
      <path d="M256 690L270 808M235 742h60M1752 684V806M1702 728h54M372 720h24M378 744l30 20h40M1520 805l24 24h90M1602 776h24" stroke={RED} strokeWidth="4" />
      <T x={271} y={734} size={14}>600</T>
      <T x={1730} y={724} size={14}>600</T>
      <T x={379} y={710} size={15}>杭州</T>
      <T x={480} y={714} size={15}>D匝道桥</T>
      <T x={410} y={752} size={12}>DK0+155.5</T>
      <T x={1620} y={768} size={15}>太湖服务区</T>
      <T x={1594} y={824} size={14}>泄水管, 间距50m</T>
      <T x={711} y={846} size={15}>A匝道</T>
      <T x={1012} y={846} size={14}>宁杭高速公路</T>
      <T x={1303} y={846} size={15}>E匝道</T>

      {/* profile table */}
      <path d="M200 949H1775M200 970H1775M200 991H1775M272 931V1012M360 948L1003 932 1700 948M1003 931v18" stroke="#ccc" strokeWidth="3" />
      <path d={AXES.map((x) => `M${x} 949V1012`).join("")} stroke="#ccc" strokeWidth="3" />
      <path d="M200 931H1775V1012H200z" stroke={GRN} strokeWidth="4" />
      {PROFILE.map((row, r) => row.map((v, i) => (
        <T key={`${r}-${i}`} x={AXES[i] + 3} y={965 + r * 21} size={12} anchor="start">{v}</T>
      )))}
      <T x={235} y={946} size={14}>纵坡</T>
      {["设计高程m", "梁高m", "里程桩号"].map((v, i) => (
        <T key={v} x={236} y={965 + i * 21} size={13}>{v}</T>
      ))}
      <T x={343} y={946} size={13}>4.000%</T>
      <T x={1683} y={946} size={13}>4.000%</T>
      <T x={1006} y={946} size={12} anchor="start">15.178  R=1250 T=50.000 E=1.00</T>

      <T x={1278} y={1088} size={19} anchor="start" weight={500}>注:</T>
      <T x={1292} y={1121} size={18} anchor="start" weight={500}>1、本图尺寸除高程(1985年国家高程基准)、桩号以m计外，其</T>
      <T x={1278} y={1154} size={18} anchor="start" weight={500}>余均以cm计。</T>
      <T x={1278} y={1193} size={20} anchor="start" weight={900}>█E匝道桥跨越高速公路桥长195m，三车道。</T>
      <T x={1278} y={1228} size={20} anchor="start" weight={900}>█设计荷载: 汽-超20，挂-120。</T>
    </svg>
  );
}

const NOTES: [number, string][] = [
  [882, "注:"],
  [898, "1、本图尺寸除高程(1985年国家高程基准)、桩号以m计外，其余均以cm计。"],
  [898, "2、D匝道桥跨越高速公路及两侧匝道，桥梁全长195m，跨径布置为30+39+50+39+30m。桥梁总宽17.5m，三车道，双向行"],
  [882, "驶，桥面横坡2%。"],
  [898, "3、设计荷载：汽-超20，挂-120。地震烈度：6度。"],
  [898, "4、上部结构为V型刚构—连续组合体系，5跨一联。主墩采用V形墩，横向上宽下窄，圆弧过渡；肋板式桥台；基础采用钻孔灌"],
  [882, "注桩，桩间距满足2.5倍桩径的要求。"],
  [898, "5、支座采用盆式橡胶支座。伸缩缝为D160毛肋伸缩缝，仅在桥台处设置。桥面铺装为6cm防水混凝土和10cm沥青混凝土铺"],
  [882, "装。"],
  [898, "6、上部施工采用搭支架现浇施工。"],
  [898, "7、桥台处地桥与桩进行软基加固处理。"],
];

function SectionSheet() {
  return (
    <svg x="790" y="500" width="800" height="580" viewBox="-150 0 2400 1740" fill="none">
      <path d="M-121 98V41h57M2157 41h57v57M2214 1632v57h-57M-121 1632v57h57" stroke="#dfe0e2" strokeWidth="4" />
      <path d="M26 102H2151V1629H26z" stroke="#fff" strokeWidth="8" />
      <path d="M1930 104v40h221M2042 104v40" stroke="#eee" strokeWidth="4" />
      <T x={1986} y={133} size={25} color="#fff" weight={800}>第 7 张</T>
      <T x={2096} y={133} size={25} color="#fff" weight={800}>共 7 张</T>

      {/* section I-I */}
      <T x={353} y={356} size={30} weight={400}>I-I</T>
      <path d="M321 364h66M907 364h65M1629 364h88" stroke="#fff" strokeWidth="7" />
      <Dim y={393} xs={[158, 546]} labels={["1750"]} />
      <Dim y={421} xs={[158, 169, 329, 535, 546]} labels={["50", "725", "975", "50"]} ext={22} />
      <Dim y={548} xs={[158, 246, 260, 443, 457, 546]} labels={["400", "40.5", "830", "40.5", "400"]} />
      <path d="M158 430V540M546 430V540M169 425v40M535 425v40" stroke={RED} strokeWidth="2" strokeDasharray="10 6 3 6" />
      <path d="M158 478V470L329 466 546 470V478L457 483 443 523H260L246 483zM280 479Q350 473 425 479 440 480 436 492L432 502Q428 512 418 512H288Q278 512 274 502L267 490Q264 480 280 479zM260 523Q272 560 272 600V685M443 523Q432 560 432 600V685M217 685h268v57H217z" stroke={GRN} strokeWidth="3" />
      <path d="M158 473L329 468 546 473M162 470v-20l8 20M543 470v-20l-8 20" stroke={GRN} strokeWidth="5" />
      <path d="M245 464h34M417 464h36" stroke={YEL} strokeWidth="2" />
      <T x={262} y={461}>2.0%</T>
      <T x={376} y={464} size={18}>设计高程</T>
      <T x={434} y={461}>2.0%</T>
      <path d="M322 458h14l-7 8z" stroke={YEL} strokeWidth="3" />
      <T x={112} y={486} size={14}>B=1cm滴水槽</T>
      <path d="M74 491h84l10-12M140 496h40" stroke={RED} strokeWidth="3" />
      <VDim x={566} y1={474} y2={523} label="220" />
      <VDim x={180} y1={685} y2={742} label="250" />
      <Dim y={630} xs={[217, 485]} labels={["1200"]} />
      <Dim y={650} xs={[217, 272, 432, 485]} labels={["240", "720", "240"]} />
      <Dim y={771} xs={[217, 252, 352, 451, 485]} labels={["150", "450", "450", "150"]} />
      <Dim y={793} xs={[217, 485]} labels={["1200"]} />
      <path d="M217 660v20M485 660v20M217 750v40M485 750v40" stroke={RED} strokeWidth="3" strokeDasharray="6 6" />
      <Piles xs={[252, 352, 451]} w={20} y1={742} y2={937} cut={833} label="180" />
      <Elev x={508} y={685} label="2.5" />
      <Elev x={508} y={741} label="-0.5" />
      <Elev x={128} y={672} label="2.5" water />
      <Elev x={499} y={937} label="" />
      <T x={526} y={925}>-45.0</T>

      {/* section II-II */}
      <T x={938} y={356} size={30} weight={400}>II-II</T>
      <Dim y={396} xs={[743, 1132]} labels={["1750"]} />
      <Dim y={424} xs={[743, 754, 915, 1120, 1132]} labels={["50", "725", "825", "50"]} ext={22} />
      <Dim y={541} xs={[743, 832, 841, 1034, 1042, 1132]} labels={["400", "37.5", "870.7", "37.5", "400"]} />
      <path d="M743 430V535M1132 430V535M754 428v36M1120 428v36M861 500v20M1016 500v20" stroke={RED} strokeWidth="2" strokeDasharray="10 6 3 6" />
      <path d="M743 480V472L915 468 1132 472V480L1042 485 1034 510H841L832 485zM862 482Q937 476 1013 482 1023 484 1022 492 1018 500 1008 500H866Q855 500 853 492 852 484 862 482zM841 510Q858 550 858 600V646M1034 510Q1018 550 1018 600V646M888 510Q902 550 902 600V646M988 510Q974 550 974 600V646M841 646h195v34H841z" stroke={GRN} strokeWidth="3" />
      <path d="M743 475L915 470 1132 475M746 472v-20l8 20M1129 472v-20l-8 20M841 511h193" stroke={GRN} strokeWidth="5" />
      <path d="M830 466h34M1004 466h36" stroke={YEL} strokeWidth="2" />
      <T x={848} y={463}>2.0%</T>
      <T x={962} y={466} size={18}>设计高程</T>
      <T x={1020} y={463}>2.0%</T>
      <path d="M908 460h14l-7 8z" stroke={YEL} strokeWidth="3" />
      <VDim x={1166} y1={475} y2={508} label="150" />
      <VDim x={822} y1={646} y2={680} label="150" />
      <Dim y={608} xs={[858, 1018]} labels={["720"]} />
      <Dim y={629} xs={[841, 858, 902, 974, 1018, 1036]} labels={["80", "205", "320", "200", "80"]} ext={22} />
      <Dim y={704} xs={[841, 865, 937, 1010, 1036]} labels={["115", "325", "325", "115"]} ext={22} />
      <Dim y={727} xs={[841, 1036]} labels={["880"]} />
      <Piles xs={[865, 937, 1010]} w={15} y1={680} y2={838} cut={745} label="130" />
      <Elev x={1067} y={646} label="2.95" />
      <Elev x={1067} y={679} label="1.545" />
      <Elev x={790} y={632} label="2.5" water />
      <Elev x={1063} y={838} label="" />
      <T x={1092} y={827}>-42.0</T>

      {/* section III-III */}
      <g transform="translate(1140 0)">
        <T x={533} y={356} size={30} weight={400}>III-III</T>
        <Dim y={391} xs={[334, 738]} labels={["1820"]} />
        <Dim y={412} xs={[341, 730]} labels={["1750"]} />
        <Dim y={440} xs={[341, 352, 513, 719, 730]} labels={["50", "725", "825", "50"]} ext={22} />
        <path d="M341 490L513 487 730 490M344 488v-20l8 20M727 488v-20l-8 20" stroke={GRN} strokeWidth="6" />
        <path d="M334 492V562H738V492M334 530H738M341 502H428V530M730 502H643V530M463 499Q536 492 608 499 620 502 620 507 620 515 608 515H463Q451 515 451 507 451 502 463 499zM334 492L128 636M738 492L945 636M112 637H963M416 562V637M433 562V637M527 562V637M545 562V637M638 562V637M656 562V637M401 638H670V673H401zM448 638v35M512 638v35M559 638v35M623 638v35M418 530v-10h10v10M643 530v-10h10v10" stroke={GRN} strokeWidth="3" />
        <path d="M341 492V562M730 492V562" stroke="#e4e4e4" strokeWidth="4" />
        <path d="M332 494L262 586M332 494L301 596M332 494L272 550M332 494L284 566M332 494L276 530M740 494L809 586M740 494L769 596M740 494L799 550M740 494L788 566M740 494L796 530" stroke="#d8d8d8" strokeWidth="3" />
        <path d="M128 636l28-20 24 20zM945 636l-28-20-24 20z" fill="#777" stroke="#fff" strokeWidth="4" strokeDasharray="5 3" />
        <path d="M273 650l8-12M283 650l8-12M293 650l8-12M303 650l8-12M313 650l8-12M323 650l8-12M273 640h62M736 650l8-12M746 650l8-12M756 650l8-12M766 650l8-12M776 650l8-12M786 650l8-12M736 640h62" stroke="#ddd" strokeWidth="3" />
        <path d="M427 482h36M603 482h38" stroke={YEL} strokeWidth="2" />
        <T x={445} y={480}>2.0%</T>
        <T x={560} y={482} size={18}>设计高程</T>
        <T x={618} y={480}>2.0%</T>
        <path d="M506 478h14l-7 8z" stroke={YEL} strokeWidth="3" />
        <text transform="translate(243 550) rotate(-35)" fontSize="15" fontWeight="700" fill={YEL} textAnchor="middle">1:1.5</text>
        <text transform="translate(830 550) rotate(35)" fontSize="15" fontWeight="700" fill={YEL} textAnchor="middle">1:1.5</text>
        <Dim y={548} xs={[448, 623]} labels={["790"]} />
        <Dim y={590} xs={[334, 424, 536, 647, 738]} labels={["410", "500", "500", "410"]} />
        <Dim y={616} xs={[416, 433]} labels={["80"]} ext={16} />
        <Dim y={616} xs={[527, 545]} labels={["80"]} ext={16} />
        <Dim y={616} xs={[638, 656]} labels={["80"]} ext={16} />
        <Dim y={702} xs={[401, 448, 512, 559, 623, 670]} labels={["220", "280", "220", "280", "220"]} />
        <Piles xs={[424, 536, 647]} w={14} y1={673} y2={769} cut={716} label="" />
        {[424, 536, 647].map((x) => <T key={x} x={x} y={748}>120</T>)}
        <path d="M388 751h22M438 751h22M610 751h22M661 751h22M500 748h20M550 748h20" stroke={RED} strokeWidth="3" />
        <path d="M424 562V670M536 562V670M647 562V670" stroke={RED} strokeWidth="3" strokeDasharray="20 5 5 5" />
        <VDim x={393} y1={530} y2={562} label="150" />
        <VDim x={378} y1={638} y2={673} label="150" />
        <Elev x={232} y={637} label="2.5" />
        <Elev x={478} y={637} label="2.450" />
        <Elev x={690} y={769} label="" />
        <T x={716} y={758}>-42.0</T>
      </g>

      {NOTES.map(([x, line], i) => (
        <T key={i} x={x} y={1166 + i * 42} size={22} anchor="start" weight={500}>{line}</T>
      ))}
      <TitleBlock y1={1546} y2={1629} mid={1586} xs={[26, 334, 747, 1152, 1264, 1375, 1486, 1597, 1708, 1819, 2151]} first={3} size={25} />
    </svg>
  );
}

function ViewCube() {
  return (
    <div className="absolute top-[13px] right-[15px] flex flex-col items-center gap-[17px]">
      <svg viewBox="0 -4 136 139" className="h-[139px] w-[136px]" role="img" aria-label="ViewCube">
        <circle cx="68" cy="65" r="54" stroke="#42494f" strokeWidth="13" fill="none" />
        <path d="M42.500 39.500h51v51h-51z" fill="#aaacad" stroke="#6b6e71" />
        <path d="M52 49h32v32H52z" fill="#9aa2a7" />
        <g fontFamily="Noto Sans CJK SC" textAnchor="middle" fill="#a9abad">
          <text x="68" y="17" fontSize="19">北</text>
          <text x="68" y="130" fontSize="19">南</text>
          <text x="11" y="73" fontSize="19">西</text>
          <text x="124" y="73" fontSize="19">东</text>
          <text x="68" y="76" fontSize="30" fontWeight="300" fill="#4a5056">上</text>
        </g>
      </svg>
      <button type="button" className="flex h-[18px] w-12 items-center justify-center gap-1.5 rounded border border-[#70727d] bg-[#8b8d9a] text-[11px] text-[#454754]">
        WCS
        <svg viewBox="0 0 8 5" className="h-[5px] w-2"><path d="M0 .5h8L4 4.500z" fill="none" stroke="#b5b7c2" /></svg>
      </button>
    </div>
  );
}

function CommandLine() {
  return (
    <div className="absolute bottom-px left-[221px] w-[1133px] max-w-full">
      <div className="flex flex-col items-start gap-[5px] pb-1 pl-[62px] font-['Liberation_Mono','Noto_Sans_CJK_SC',monospace] text-[17px] leading-[22px] whitespace-pre">
        <span className="h-[22px] rounded-sm bg-[#505254] px-[3px] text-[#aeb0b1]">命令:</span>
        <span className="h-[22px] rounded-sm bg-[#585a5b] px-[5px] text-[#cfd0d1]">**** 没有系统变量更改 ****</span>
        <span className="h-[22px] rounded-sm bg-[#626464] px-[3px] text-white">命令:</span>
      </div>
      <div className="flex h-[25px]">
        <div className="flex w-14 items-center gap-1 bg-[#2a2f3a] pl-1">
          <svg viewBox="0 0 50 18" className="h-[18px] w-[50px]" aria-hidden="true">
            <path d="M1.500 1v17M4.500 1v17" stroke="#b5b7ba" strokeWidth="2" strokeDasharray="2 1" />
            <path d="M11 5l8 8M19 5l-8 8" stroke="#c4c6c9" strokeWidth="1.800" />
            <path d="M31 16l8-8c-1-4 1-6 4-6l-2 3 2 2 3-2c0 3-2 5-5 5l-8 8z" fill="#c4c6c9" />
          </svg>
        </div>
        <label className="flex flex-1 items-center rounded-sm bg-[#bbbdbf] pr-[3px] pl-1">
          <svg viewBox="0 0 26 14" className="h-3.5 w-[26px]" aria-hidden="true">
            <path d="M.500 1.500h15v12H.500z" stroke="#55585c" fill="none" />
            <path d="M0 1h16v3H0z" fill="#55585c" />
            <path d="M3 6l3 2-3 2M7 11h4" stroke="#55585c" fill="none" />
            <path d="M18 5h8l-4 4z" fill="#55585c" />
          </svg>
          <input aria-label="命令行" placeholder="键入命令" className="h-full min-w-0 flex-1 bg-transparent pl-[7px] text-[18px] italic outline-none placeholder:text-[#6f7275]" />
          <svg viewBox="0 0 8 4" className="h-1 w-2" aria-hidden="true"><path d="M0 4h8L4 0z" fill="#55585c" /></svg>
        </label>
      </div>
    </div>
  );
}

function ModelSpace() {
  return (
    <main className="relative min-w-0 flex-1 overflow-hidden bg-[#212830]">
      <svg viewBox="33 133 1576 1205" className="absolute inset-0 h-full w-full" fontFamily="Open Sans, Noto Sans CJK SC, sans-serif">
        <path d="M33 413.500H80M33 421.500H80M33 424.500H80M80.500 421V453M80.500 406v9M33 473.500H80M80.500 466v9M80.500 461v1M80.500 402v1" stroke="#c40000" fill="none" />
        <text x="39" y="472" fontSize="6" fontWeight="700" fill={YEL}>30m</text>
        <g fontFamily="Liberation Serif, serif" fontSize="92" fill="#212830" stroke="#d80000">
          <text x="422" y="424" textAnchor="middle">0.6</text>
          <text x="1250" y="424" textAnchor="middle">0.75</text>
        </g>
        <BridgeSheet />
        <SectionSheet />
      </svg>
      <span className="absolute top-0.5 left-[3px] text-[13px] leading-5 text-black">[−][俯视][二维线框]</span>
      <ViewCube />
      <svg viewBox="0 0 80 76" className="absolute bottom-[21px] left-6 h-[76px] w-20" aria-hidden="true">
        <path d="M4.500 19v50H56M.500 64.500h9v9h-9z" stroke="#dcdddf" fill="none" />
        <path d="M6 2l6 7 6-7M12 9v7M60 55l12 13M72 55L60 68" stroke="#dcdddf" fill="none" />
      </svg>
      <CommandLine />
    </main>
  );
}

function StatusGroup({ items, on = [] }: { items: string[]; on?: string[] }) {
  return (
    <div className="flex h-6 items-center bg-[#3b4453]">
      {items.map((name, i) =>
        name === "v" ? (
          <button key={i} type="button" aria-label="展开" className="flex w-4 justify-center"><Caret /></button>
        ) : (
          <button key={i} type="button" aria-label={name} className={`flex h-full w-6 items-center justify-center ${on.includes(name) ? "bg-[#5d8ec4]" : ""}`}>
            <Icon name={name} />
          </button>
        )
      )}
    </div>
  );
}

function StatusBar() {
  return (
    <footer className="flex h-8 items-start border-t border-[#454b54] pr-[5px] pl-[17px] text-[#c4c7cd]">
      <div className="flex gap-1">
        <button type="button" className="h-[17px] w-11 rounded-b-lg bg-[#3b4453] leading-4 font-bold text-white">模型</button>
        <button type="button" className="h-[17px] w-[63px] rounded-b-lg bg-[#2c3340] leading-4">Layout1</button>
        <button type="button" aria-label="新建布局" className="ml-1 flex h-4 w-5 items-center justify-center rounded-b-lg bg-[#2c3340]">
          <svg viewBox="0 0 8 8" className="h-2 w-2"><path d="M4 0v8M0 4h8" stroke="#b9bdc5" strokeWidth="2" /></svg>
        </button>
      </div>
      <div className="ml-auto flex gap-0.5 pt-px">
        <button type="button" className="h-6 w-[30px] bg-[#3b4453] text-white">模型</button>
        <StatusGroup items={["grid", "snap", "v"]} />
        <div className="flex">
          <StatusGroup items={["ortho", "polar", "v", "iso", "v"]} on={["ortho"]} />
          <StatusGroup items={["otrack", "osnap", "v"]} on={["osnap"]} />
        </div>
        <StatusGroup items={["lwt"]} />
        <div className="flex bg-[#3b4453]">
          <StatusGroup items={["anno1", "anno2", "anno3"]} on={["anno1"]} />
          <button type="button" className="flex h-6 items-center gap-1 px-1 text-white">1:1<Caret /></button>
        </div>
        <StatusGroup items={["gear", "v"]} />
        <StatusGroup items={["plus"]} />
        <StatusGroup items={["shapes"]} />
        <StatusGroup items={["hardware"]} />
        <StatusGroup items={["expand", "menu"]} />
      </div>
    </footer>
  );
}

function App() {
  return (
    <div className="flex min-h-screen flex-col overflow-x-hidden border-t border-r border-b border-[#0696d7] bg-[#212830] font-['Noto_Sans','Noto_Sans_CJK_SC',sans-serif] text-xs">
      <header className="bg-[#474f61]">
        <TitleBar />
        <nav className="flex h-[21px] items-center gap-[25px] pl-[18px] text-[#bcc0c8]">
          {MENUS.map((m) => (
            <button key={m} type="button" className="whitespace-nowrap">{m}</button>
          ))}
          <div className="ml-auto flex gap-1 pr-1">
            <button type="button" aria-label="最小化图形"><svg viewBox="0 0 14 14" className="h-3.5 w-3.5"><path d="M2 11h9" stroke="#dcdddf" strokeWidth="2" /></svg></button>
            <button type="button" aria-label="还原图形"><svg viewBox="0 0 14 14" className="h-3.5 w-3.5"><path d="M1 6h8v6H1zM4 6V3h9v6H9M4 2.500h9M1 5.500h8" stroke="#dcdddf" strokeWidth="1.300" fill="none" /></svg></button>
            <button type="button" aria-label="关闭图形"><svg viewBox="0 0 14 14" className="h-3.5 w-3.5"><path d="M2 2l10 10M12 2L2 12" stroke="#dcdddf" strokeWidth="2" /></svg></button>
          </div>
        </nav>
      </header>
      <FileTabs />
      <div className="flex flex-1 flex-col pr-[3px] pl-1">
        <Toolbars />
        <div className="flex flex-1">
          <aside className="flex w-[29px] shrink-0 items-start bg-[#3b4453]">
            <SideBar items={DRAW_TOOLS} />
          </aside>
          <ModelSpace />
          <aside className="flex w-8 shrink-0 items-start bg-[#3b4453] pl-1">
            <SideBar items={MODIFY_TOOLS} />
          </aside>
        </div>
      </div>
      <StatusBar />
    </div>
  );
}

export default App;
